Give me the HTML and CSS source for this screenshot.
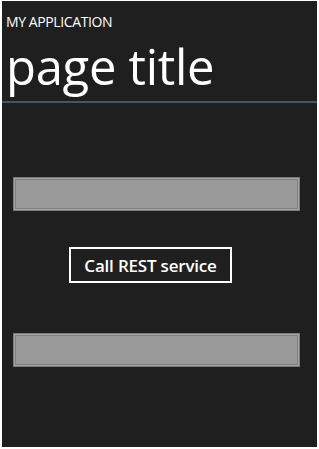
FILE: index.html
```html
<!DOCTYPE html>
<html>
<head>
<meta charset="utf-8">
<link rel="stylesheet" href="styles.css">
</head>
<body>
<div class="frame">
  <div class="header">
    <div class="app-name">MY APPLICATION</div>
    <div class="page-title">page title</div>
  </div>
  <div class="divider"></div>
  <div class="content">
    <div class="textbox"></div>
    <div class="btn-row"><button class="btn">Call REST service</button></div>
    <div class="textbox second"></div>
  </div>
</div>
</body>
</html>
```
FILE: styles.css
```css
html, body {
  margin: 0;
  padding: 0;
  background: #ffffff;
}
.frame {
  margin: 1px 0 0 2px;
  width: 315px;
  height: 446px;
  background: #1f1f1f;
  color: #ffffff;
  font-family: "Open Sans", "Noto Sans", sans-serif;
  display: flex;
  flex-direction: column;
}
.header {
  padding: 13px 0 0 4px;
}
.app-name {
  font-size: 14px;
  line-height: 16px;
  letter-spacing: -0.4px;
}
.page-title {
  font-size: 49px;
  line-height: 56px;
  margin-top: 8px;
  letter-spacing: -0.3px;
}
.divider {
  height: 2px;
  background: #4a5560;
  margin-top: 7px;
}
.content {
  display: flex;
  flex-direction: column;
  padding: 74px 0 0 11px;
}
.textbox {
  width: 287px;
  height: 34px;
  box-sizing: border-box;
  background: #9a9a9a;
  border: 1px solid #7a7a7a;
  box-shadow: inset 0 0 0 1px #a4a4a4, inset 0 0 0 2px #808080;
}
.btn-row {
  padding-left: 56px;
  margin-top: 36px;
}
.btn {
  width: 163px;
  height: 36px;
  box-sizing: border-box;
  background: transparent;
  border: 2px solid #ffffff;
  color: #ffffff;
  font-family: "Open Sans", "Noto Sans", sans-serif;
  font-size: 17px;
  font-weight: 600;
  letter-spacing: -0.2px;
  padding: 0;
  margin: 0;
}
.second {
  margin-top: 50px;
}
```
